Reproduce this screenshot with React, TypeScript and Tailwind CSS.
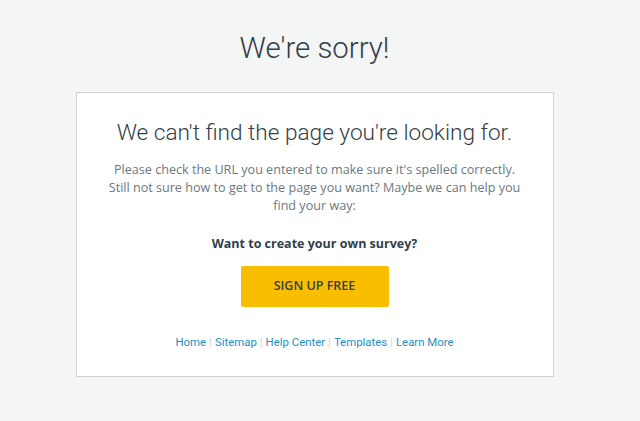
export default function App() {
  const links = ['Home', 'Sitemap', 'Help Center', 'Templates', 'Learn More']

  return (
    <div
      className="min-h-[421px] bg-[#f4f5f5] flex flex-col items-center pt-[29px] pr-[11px]"
      style={{ fontFamily: '"Open Sans", Arial, sans-serif' }}
    >
      <h1
        className="text-[29.4px] leading-[38px] text-[#333e48] font-light"
        style={{ fontFamily: 'Roboto, "Open Sans", sans-serif' }}
      >
        We're sorry!
      </h1>

      <div className="mt-[25px] w-[478px] h-[285px] bg-white border border-[#d0d2d3] flex flex-col items-center pt-[24px]">
        <h2
          className="text-[22.6px] leading-[32px] text-[#333e48] font-light"
          style={{ fontFamily: 'Roboto, "Open Sans", sans-serif' }}
        >
          We can't find the page you're looking for.
        </h2>
        <p className="mt-[12px] w-[420px] text-center text-[12.6px] leading-[18px] text-[#6b787f]">
          Please check the URL you entered to make sure it's spelled correctly. Still not sure how to
          get to the page you want? Maybe we can help you find your way:
        </p>
        <p className="mt-[20px] text-[12.5px] leading-[18px] font-bold text-[#333e48]">
          Want to create your own survey?
        </p>
        <button className="mt-[13px] w-[148px] h-[41px] bg-[#f9be00] rounded-[2px] text-[12.5px] font-semibold text-[#333e48]">
          SIGN UP FREE
        </button>
        <div
          className="mt-[27px] flex items-center text-[11.4px] leading-[16px]"
          style={{ fontFamily: 'Roboto, "Open Sans", sans-serif' }}
        >
          {links.map((l, i) => (
            <span key={l} className="flex items-center">
              {i > 0 && <span className="mx-[3px] text-[#d0d2d3]">|</span>}
              <a href="#" className="text-[#1f8fc1]">
                {l}
              </a>
            </span>
          ))}
        </div>
      </div>
    </div>
  )
}
